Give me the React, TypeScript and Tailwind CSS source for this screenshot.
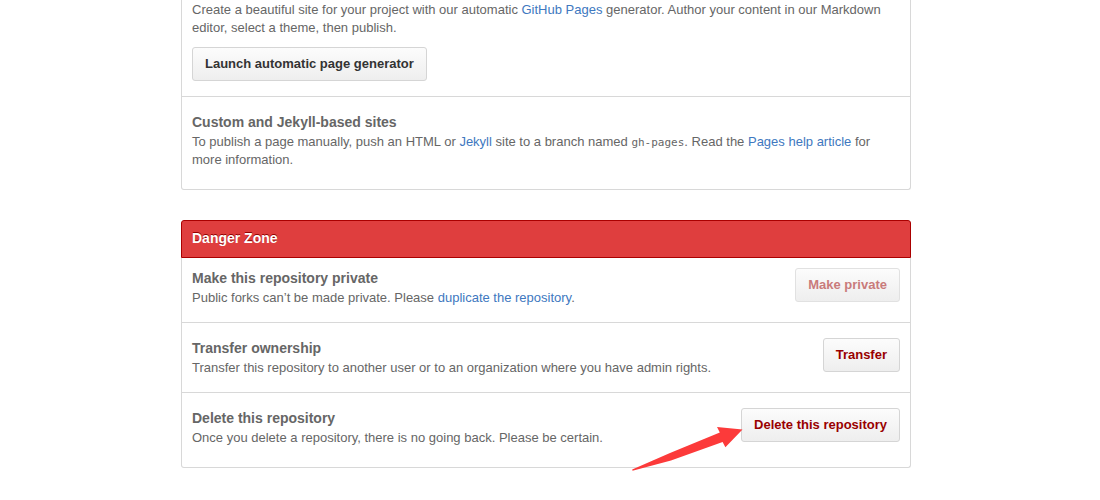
import type { ReactNode } from "react";

function Button({
  children,
  danger = false,
  disabled = false,
}: {
  children: ReactNode;
  danger?: boolean;
  disabled?: boolean;
}) {
  return (
    <button
      type="button"
      disabled={disabled}
      className={`h-[34px] shrink-0 whitespace-nowrap rounded-[3px] border border-[#d5d5d5] bg-linear-to-b from-[#fcfcfc] to-[#eeeeee] px-3 pb-px text-[13px] leading-5 font-bold disabled:border-[#e1e1e1] disabled:text-[#c97b7b] ${
        danger ? "text-[#990000]" : "text-[#333333]"
      }`}
    >
      {children}
    </button>
  );
}

function Link({ children }: { children: ReactNode }) {
  return (
    <a href="#" className="text-[#4078c0] hover:underline">
      {children}
    </a>
  );
}

function Arrow() {
  return (
    <svg
      aria-hidden="true"
      viewBox="0 0 112 46"
      className="pointer-events-none absolute top-[18px] right-full -mr-[2px] h-[46px] w-[112px]"
    >
      <path
        d="M111.5 3.4 L86 1 L88.8 6.5 L39 27 L1.2 43.6 L1.5 44.8 L40 34.5 L91.6 16 L94.4 21.2 Z"
        fill="#fc3a3a"
      />
    </svg>
  );
}

function Row({
  title,
  action,
  className = "",
  children,
}: {
  title: string;
  action?: ReactNode;
  className?: string;
  children: ReactNode;
}) {
  return (
    <div className={`flex items-start justify-between gap-4 px-[10px] ${className}`}>
      <div className="min-w-0">
        <h4 className="text-[14px] leading-5 font-bold">{title}</h4>
        <p className="pt-px">{children}</p>
      </div>
      {action}
    </div>
  );
}

export default function App() {
  return (
    <main className="bg-white pr-2 pb-8 font-['Liberation_Sans',Arial,sans-serif] text-[13px] leading-[18px] text-[#666666]">
      <div className="mx-auto max-w-[730px]">
        <section className="rounded-b-[3px] border border-t-0 border-[#d8d8d8]">
          <div className="px-[10px] pt-px pb-[15px]">
            <p>
              Create a beautiful site for your project with our automatic <Link>GitHub Pages</Link>{" "}
              generator. Author your content in our Markdown editor, select a theme, then publish.
            </p>
            <div className="mt-[10px] flex">
              <Button>Launch automatic page generator</Button>
            </div>
          </div>
          <Row
            title="Custom and Jekyll-based sites"
            className="border-t border-[#d8d8d8] pt-[15px] pb-5"
          >
            To publish a page manually, push an HTML or <Link>Jekyll</Link> site to a branch named{" "}
            <code className="font-['DejaVu_Sans_Mono',monospace] text-[11px] leading-none">
              gh-pages
            </code>
            . Read the <Link>Pages help article</Link> for more information.
          </Row>
        </section>

        <section className="mt-[30px]">
          <h3 className="rounded-t-[3px] border border-[#aa0000] bg-[#df3e3e] px-[10px] pt-[7px] pb-[9px] text-[14px] leading-5 font-bold text-white [text-shadow:0_-1px_0_#900000]">
            Danger Zone
          </h3>
          <div className="rounded-b-[3px] border border-t-0 border-[#d8d8d8]">
            <Row
              title="Make this repository private"
              className="pt-[10px] pb-[15px]"
              action={
                <Button danger disabled>
                  Make private
                </Button>
              }
            >
              Public forks can’t be made private. Please <Link>duplicate the repository</Link>.
            </Row>
            <Row
              title="Transfer ownership"
              className="border-t border-[#d8d8d8] pt-[15px] pb-[15px]"
              action={<Button danger>Transfer</Button>}
            >
              Transfer this repository to another user or to an organization where you have admin
              rights.
            </Row>
            <Row
              title="Delete this repository"
              className="border-t border-[#d8d8d8] pt-[15px] pb-5"
              action={
                <div className="relative flex shrink-0">
                  <Button danger>Delete this repository</Button>
                  <Arrow />
                </div>
              }
            >
              Once you delete a repository, there is no going back. Please be certain.
            </Row>
          </div>
        </section>
      </div>
    </main>
  );
}
